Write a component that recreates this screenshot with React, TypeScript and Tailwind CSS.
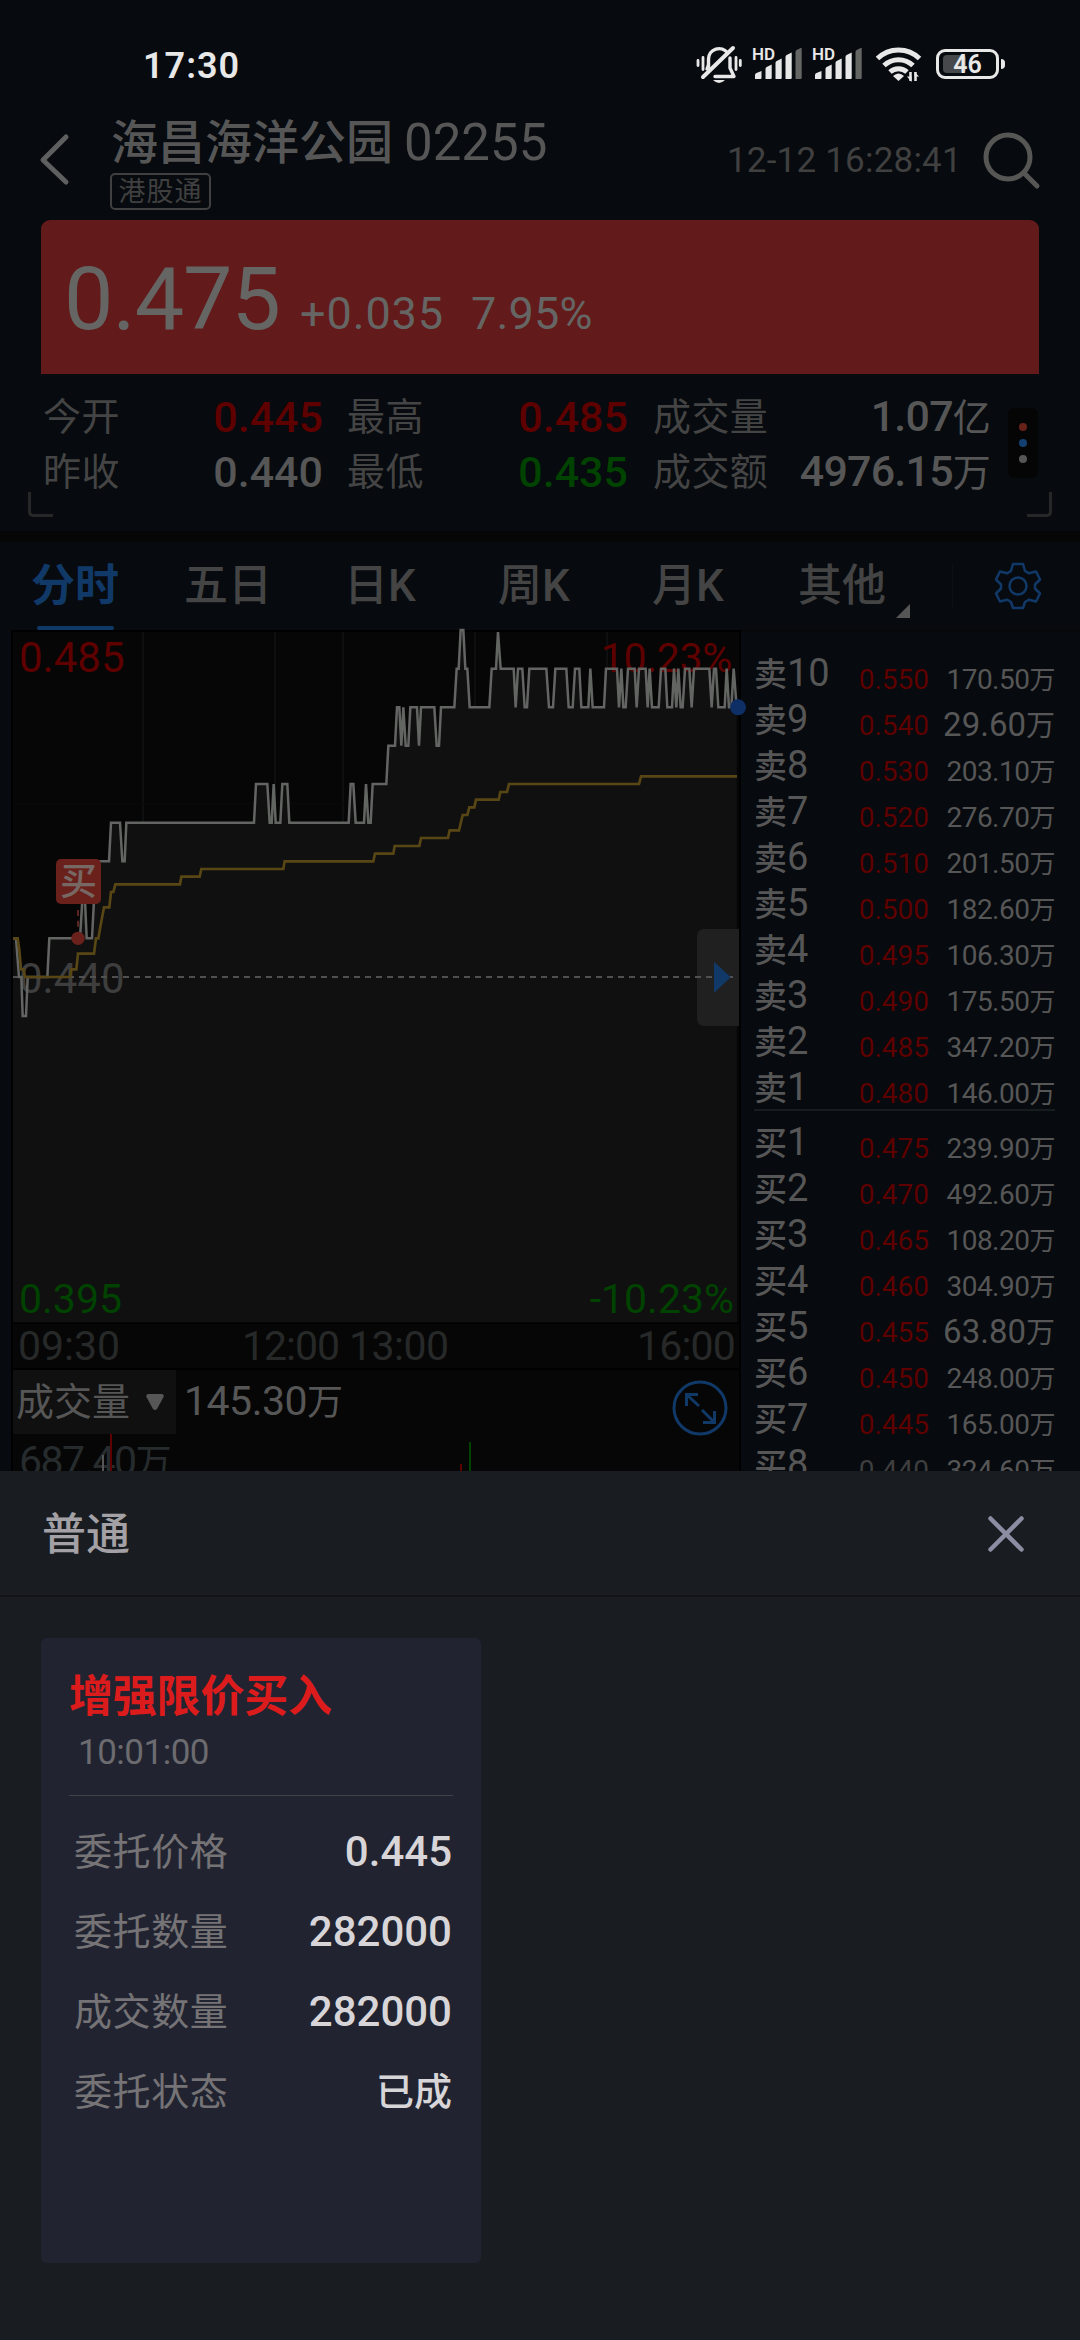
import React from 'react';
import clsx from 'clsx';

interface Level {
    label: string;
    price: string;
    volume: string;
    flat?: boolean;
}

interface Quote {
    label: string;
    value: string;
    unit?: string;
    color: string;
}

const asks: Level[] = [
    { label: '10', price: '0.550', volume: '170.50' },
    { label: '9', price: '0.540', volume: '29.60' },
    { label: '8', price: '0.530', volume: '203.10' },
    { label: '7', price: '0.520', volume: '276.70' },
    { label: '6', price: '0.510', volume: '201.50' },
    { label: '5', price: '0.500', volume: '182.60' },
    { label: '4', price: '0.495', volume: '106.30' },
    { label: '3', price: '0.490', volume: '175.50' },
    { label: '2', price: '0.485', volume: '347.20' },
    { label: '1', price: '0.480', volume: '146.00' },
];

const bids: Level[] = [
    { label: '1', price: '0.475', volume: '239.90' },
    { label: '2', price: '0.470', volume: '492.60' },
    { label: '3', price: '0.465', volume: '108.20' },
    { label: '4', price: '0.460', volume: '304.90' },
    { label: '5', price: '0.455', volume: '63.80' },
    { label: '6', price: '0.450', volume: '248.00' },
    { label: '7', price: '0.445', volume: '165.00' },
    { label: '8', price: '0.440', volume: '324.60', flat: true },
];

const quoteColumns: { width: string; items: Quote[] }[] = [
    {
        width: 'w-[280px] mr-[24px]',
        items: [
            { label: '今开', value: '0.445', color: 'text-[#5e0000]' },
            { label: '昨收', value: '0.440', color: 'text-[#565656]' },
        ],
    },
    {
        width: 'w-[281px] mr-[25px]',
        items: [
            { label: '最高', value: '0.485', color: 'text-[#5e0000]' },
            { label: '最低', value: '0.435', color: 'text-[#004200]' },
        ],
    },
    {
        width: 'w-[337px] mr-[25px]',
        items: [
            { label: '成交量', value: '1.07', unit: '亿', color: 'text-[#565656]' },
            { label: '成交额', value: '4976.15', unit: '万', color: 'text-[#565656]' },
        ],
    },
];

const orderRows = [
    { label: '委托价格', value: '0.445' },
    { label: '委托数量', value: '282000' },
    { label: '成交数量', value: '282000' },
    { label: '委托状态', value: '已成' },
];

// Chart space is three units per pixel
const priceLine =
    '39,955 48,955 57,1071 64,1071 68,1188 78,1188 83,1071 142,1071 148,955 240,955 247,840 255,840 260,955 276,955 282,840 ' +
    '290,724 327,724 333,608 360,608 367,724 374,724 379,608 762,608 768,492 802,492 809,608 815,608 821,492 827,608 841,608 ' +
    '847,492 862,492 868,608 1046,608 1052,492 1060,492 1067,608 1092,608 1098,492 1105,608 1112,608 1118,492 1159,492 ' +
    '1165,377 1185,377 1191,262 1198,262 1204,377 1210,262 1217,377 1225,377 1231,262 1251,262 1257,377 1263,262 1303,262 ' +
    '1310,377 1317,377 1323,262 1363,262 1370,146 1376,146 1382,30 1390,30 1396,146 1402,146 1409,262 1468,262 1475,146 ' +
    '1488,146 1494,36 1502,146 1541,146 1547,262 1554,146 1567,146 1574,262 1581,262 1588,146 1639,146 1647,262 1659,262 ' +
    '1666,146 1699,146 1706,262 1718,262 1725,146 1738,146 1744,262 1765,262 1771,146 1778,262 1812,262 1818,146 1851,146 ' +
    '1857,262 1864,146 1870,262 1877,262 1884,146 1904,146 1910,262 1917,146 1937,146 1943,262 1949,146 1956,262 1976,262 ' +
    '1983,146 1996,146 2002,262 2016,262 2022,146 2029,262 2035,146 2042,262 2048,262 2055,146 2068,146 2075,262 2082,146 ' +
    '2128,146 2135,262 2142,146 2148,146 2155,262 2174,262 2180,146 2187,262 2194,262 2201,146 2210,262';

const averageLine =
    '39,955 53,955 58,990 63,1048 70,1048 75,1071 210,1071 214,1048 229,1048 234,1001 282,1001 288,955 295,955 303,910 ' +
    '312,862 328,862 333,816 340,816 346,793 540,793 544,770 599,770 604,747 850,747 854,724 1120,724 1125,701 1180,701 ' +
    '1184,678 1258,678 1263,654 1344,654 1349,631 1377,631 1388,585 1402,585 1408,562 1423,562 1428,539 1496,539 1501,516 ' +
    '1521,516 1527,492 1917,492 1923,469 2211,469';

const SignalBars: React.FC = () => (
    <div className="relative h-[32px] w-[50px]">
        <span className="absolute -left-[1px] -top-[1px] text-[17px] font-semibold leading-[14px]">HD</span>
        <svg className="h-full w-full" viewBox="0 0 50 32" fill="#e8e8e8">
            <path d="M2 31v-4q0-1.500 1.500-2L8.500 23v7q0 1-1 1z" />
            <path d="M12.500 31V21q0-1.300 1.200-2l5-2.500V30q0 1-1 1z" />
            <path d="M22.500 31V15q0-1.300 1.200-2l5-2.500V30q0 1-1 1z" />
            <path d="M32.500 31V9q0-1.300 1.200-2l5-2.500V30q0 1-1 1z" />
            <path d="M42.500 31V4q0-1.300 1.200-2l5-2.500V30q0 1-1 1z" fill="#646664" />
        </svg>
    </div>
);

const StatusBar: React.FC = () => (
    <div className="flex h-[128px] items-center justify-between pl-[143px] pr-[75px] text-[#e8e8e8]">
        <span className="mt-[3px] text-[36px] font-semibold tracking-[1px]">17:30</span>
        <div className="flex items-center">
            <svg className="mr-[11px] h-[40px] w-[46px]" viewBox="0 0 46 40" fill="none" stroke="#e8e8e8" strokeWidth="3.400" strokeLinecap="round">
                <path d="M2 16.500v5M7 13.500v12M40 13.500v12M44.300 16.500v5" strokeWidth="2.800" />
                <path d="M12.500 23v-8a10.500 10.500 0 0 1 19-6M34 14v10l4 8.500H19" strokeLinejoin="round" />
                <path d="M12.500 21l-1.500 4" />
                <path d="M7 33L37 4" strokeWidth="4" />
                <path d="M17 36h12q-6 6-12 0z" fill="#e8e8e8" stroke="none" />
            </svg>
            <SignalBars />
            <div className="w-[10px]" />
            <SignalBars />
            <svg className="ml-[12px] h-[36px] w-[48px]" viewBox="0 0 48 36" fill="none" stroke="#e8e8e8" strokeWidth="5">
                <path d="M2.500 12.500a30 30 0 0 1 42 0" />
                <path d="M9 19.500a21 21 0 0 1 29 0" />
                <path d="M15 26a12.500 12.500 0 0 1 17 0" />
                <path d="M18 30q5.500-5 11 0l-5.500 5z" fill="#e8e8e8" stroke="none" />
                <path d="M35.500 26v9M40.500 35v-9" strokeWidth="2.500" />
                <path d="M32 30.500l4.500 5.500V30.500zM44 30.500L39.500 26v4.500z" fill="#e8e8e8" stroke="none" />
            </svg>
            <div className="relative ml-[13px] mr-[2px] flex h-[30px] w-[63px] items-center justify-center rounded-[9px] border-[3px] border-[#e8e8e8]">
                <div className="absolute left-[4px] top-[3px] h-[18px] w-[23px] rounded-[4px] bg-[#46484c]" />
                <span className="relative text-[25px] font-semibold leading-none">46</span>
            </div>
            <div className="h-[10px] w-[4px] rounded-r-full bg-[#e8e8e8]" />
        </div>
    </div>
);

const Header: React.FC = () => (
    <div className="flex h-[92px] items-start">
        <svg className="ml-[38px] mt-[3px] h-[56px] w-[34px]" viewBox="0 0 34 56" fill="none" stroke="#5e605f" strokeWidth="5" strokeLinecap="round" strokeLinejoin="round">
            <path d="M28 6L5 29l23 22" />
        </svg>
        <div className="ml-[38px] flex w-[560px] flex-col items-start">
            <div className="-mt-[12px] flex h-[54px] items-center whitespace-pre text-[#565656]">
                <span className="ml-px text-[47px] font-medium leading-[54px]">海昌海洋公园</span>
                <span className="ml-[11px] text-[51px] leading-[54px]">02255</span>
            </div>
            <div className="mt-[3px] flex h-[37px] w-[101px] items-center justify-center rounded-[5px] border-2 border-[#404040] pt-[2px] text-[27px] leading-none tracking-[1px] text-[#404040]">
                港股通
            </div>
        </div>
        <span className="ml-[57px] mt-[13px] text-[35px] leading-[40px] tracking-[0.2px] text-[#404040]">12-12 16:28:41</span>
        <svg className="ml-auto mr-[38px] mt-[2px] h-[60px] w-[60px]" viewBox="0 0 60 60" fill="none" stroke="#565654" strokeWidth="5" strokeLinecap="round">
            <circle cx="26" cy="27" r="22" />
            <path d="M42 43l13 13" />
        </svg>
    </div>
);

const Quotes: React.FC = () => (
    <div className="relative flex h-[157px] pl-[43px] pt-[16px]">
        {quoteColumns.map((col, i) => (
            <div key={i} className={clsx('flex flex-col', col.width)}>
                {col.items.map((q) => (
                    <div key={q.label} className="flex h-[55px] items-center justify-between whitespace-nowrap leading-[55px]">
                        <span className="text-[38px] tracking-[0.400px] text-[#444444]">{q.label}</span>
                        <span className={clsx('font-medium', q.unit ? 'text-[43px] tracking-[-0.800px]' : 'text-[43px]', q.color)}>
                            {q.value}
                            {q.unit && <span className="text-[38px] font-normal">{q.unit}</span>}
                        </span>
                    </div>
                ))}
            </div>
        ))}
        <div className="-ml-[7px] mt-[18px] flex h-[70px] w-[30px] flex-col items-center justify-center gap-[8px] rounded-[6px] bg-[#050505]">
            <i className="h-[8px] w-[8px] rounded-full bg-[#662219]" />
            <i className="h-[8px] w-[8px] rounded-full bg-[#154072]" />
            <i className="h-[8px] w-[8px] rounded-full bg-[#565656]" />
        </div>
        <div className="absolute bottom-[14px] left-[28px] h-[25px] w-[25px] rounded-bl-[5px] border-b-[3px] border-l-[3px] border-[#262828]" />
        <div className="absolute bottom-[14px] right-[28px] h-[25px] w-[25px] rounded-br-[5px] border-b-[3px] border-r-[3px] border-[#262828]" />
    </div>
);

const Tabs: React.FC = () => (
    <div className="flex h-[88px] items-center whitespace-nowrap text-[44px] leading-[90px] text-[#444444]">
        <div className="relative ml-[31px] w-[153px] font-bold text-[#113968]">
            分时
            <div className="absolute bottom-px left-[6px] h-[4px] w-[77px] rounded-full bg-[#113968]" />
        </div>
        <div className="w-[160px] font-medium">五日</div>
        <div className="w-[154px] font-medium">日K</div>
        <div className="w-[154px] font-medium">周K</div>
        <div className="w-[146px] font-medium">月K</div>
        <div className="w-[98px] font-medium">其他</div>
        <svg className="mt-[50px] h-[14px] w-[14px]" viewBox="0 0 14 14">
            <path d="M14 0v14H0z" fill="#565656" />
        </svg>
        <div className="ml-[42px] h-[42px] w-px bg-[#0d1014]" />
        <svg className="ml-[41px] h-[48px] w-[48px]" viewBox="0 0 48 48" fill="none" stroke="#113968" strokeWidth="2.500" strokeLinejoin="round">
            <path d="M19 2h10l2 7 4 2.300 7-1.800 4 8-5 5v4l5 5-4 8-7-1.800-4 2.300-2 6H19l-2-6-4-2.300-7 1.800-4-8 5-5v-4l-5-5 4-8 7 1.800 4-2.300z" />
            <circle cx="24" cy="24" r="8.500" />
        </svg>
    </div>
);

const PriceChart: React.FC = () => (
    <div className="relative h-[694px] border-2 border-black bg-[#060606] text-[42px] leading-[42px]">
        <svg className="absolute -left-[3px] -top-[3px] h-[696px] w-[743px] overflow-visible" viewBox="30 27 2229 2088" fill="none">
            <path d="M429 36V1500M825 36V1500M1029 36V1500M1425 36V1500M1821 36V1500" stroke="#101114" strokeWidth="5" />
            <path d="M39 551H2211" stroke="#0a0c0c" strokeWidth="3" />
            <polygon points={`39,2107 ${priceLine} 2211,2107`} fill="#101010" />
        </svg>
        <span className="absolute left-[6px] top-[5px] text-[#5e0000]">0.485</span>
        <span className="absolute right-[7px] top-[5px] text-[41px] tracking-[-0.300px] text-[#5e0000]">10.23%</span>
        <span className="absolute left-[6px] top-[326px] text-[#3e3e3e]">0.440</span>
        <span className="absolute bottom-[2px] left-[6px] text-[41px] text-[#004200]">0.395</span>
        <span className="absolute bottom-[2px] right-[5px] text-[41px] text-[#004200]">-10.23%</span>
        <div className="absolute right-0 top-[297px] h-[97px] w-[42px] rounded-l-[7px] bg-[#202020]" />
        <svg className="absolute -left-[3px] -top-[3px] h-[696px] w-[743px] overflow-visible" viewBox="30 27 2229 2088" fill="none">
            <path d="M39 1071H2199" stroke="#505050" strokeWidth="6" strokeDasharray="18 15" />
            <polyline points={priceLine} stroke="#636563" strokeWidth="7.500" />
            <polyline points={averageLine} stroke="#584715" strokeWidth="8" />
            <path d="M2142 1025l50 47-50 47z" fill="#113968" />
        </svg>
        <svg className="absolute -left-[3px] -top-[3px] z-10 h-[696px] w-[743px] overflow-visible" viewBox="30 27 2229 2088" fill="none">
            <path d="M234 870v50" stroke="#5c2420" strokeWidth="6" strokeDasharray="18 14" />
            <circle cx="234" cy="955" r="20" fill="#6a211c" />
            <circle cx="2214" cy="262" r="24" fill="#0d2f66" />
        </svg>
        <div className="absolute left-[43px] top-[227px] flex h-[45px] w-[45px] items-center justify-center rounded-[5px] bg-[#6a211c] pt-[2px] text-[37px] font-medium leading-[45px] text-[#776864]">
            买
        </div>
    </div>
);

const VolumeChart: React.FC = () => (
    <div className="relative h-[101px] border-x-2 border-black bg-[#060606]">
        <div className="flex h-[64px] items-center leading-[64px] text-[#565656]">
            <div className="flex h-full w-[163px] items-center bg-[#101010] pl-[3px] text-[38px]">
                成交量
                <svg className="ml-[16px] h-[16px] w-[18px]" viewBox="0 0 18 16">
                    <path d="M2 0h14q3 1 1 4l-6 11q-2 2-4 0L1 4q-2-3 1-4z" fill="#565656" />
                </svg>
            </div>
            <span className="ml-[8px] text-[41px] tracking-[-0.500px]">145.30<span className="text-[36px]">万</span></span>
            <svg className="ml-auto mr-[11px] mt-[12px] h-[56px] w-[56px]" viewBox="0 0 56 56" fill="none" stroke="#113968" strokeWidth="3">
                <circle cx="28" cy="28" r="26" />
                <path d="M14.500 26V14.500H26M14.500 14.500L27 26M30 30l12.500 12.500M31 42.500h11.500V31" />
            </svg>
        </div>
        <span className="absolute left-[6px] top-[66px] text-[41px] leading-[50px] tracking-[-1.600px] text-[#262c2d]">687.40<span className="text-[36px]">万</span></span>
        <svg className="absolute left-0 top-[64px] h-[46px] w-[720px]" viewBox="0 0 720 46" strokeWidth="2">
            <path d="M98 0v46M448 30v16" stroke="#5e0000" />
            <path d="M90 21v25" stroke="#565656" />
            <path d="M457 8v38" stroke="#004200" />
        </svg>
    </div>
);

const LevelRow: React.FC<{ side: string; level: Level }> = ({ side, level }) => (
    <div className="flex h-[46px] shrink-0 items-center whitespace-nowrap leading-[46px]">
        <span className="w-[90px] text-[#565656]">
            <span className="text-[33px] font-medium">{side}</span>
            <span className="text-[38px]">{level.label}</span>
        </span>
        <span className={clsx('mt-[5px] w-[85px] text-right text-[28px]', level.flat ? 'text-[#3e3e3e]' : 'text-[#5e0000]')}>
            {level.price}
        </span>
        <span
            className={clsx(
                'flex-1 text-right text-[#565656]',
                level.volume.length < 6 ? 'mt-[4px] text-[33px]' : 'mt-[5px] text-[28px] tracking-[-0.500px]'
            )}
        >
            {level.volume}
            <span className={level.volume.length < 6 ? 'text-[29px]' : 'text-[26px]'}>万</span>
        </span>
    </div>
);

const OrderBook: React.FC = () => (
    <div className="flex h-[841px] flex-1 flex-col overflow-hidden border-t-2 border-[#06080a] pl-[13px] pr-[25px]">
        <div className="flex h-[479px] shrink-0 flex-col border-b-2 border-[#171d1e] pt-[22px]">
            {asks.map((level) => (
                <LevelRow key={level.label} side="卖" level={level} />
            ))}
        </div>
        <div className="flex flex-col pt-[12px]">
            {bids.map((level) => (
                <LevelRow key={level.label} side="买" level={level} />
            ))}
        </div>
    </div>
);

const OrderSheet: React.FC = () => (
    <div className="flex h-[869px] flex-col bg-[#191c21]">
        <div className="flex h-[126px] items-center justify-between border-b-2 border-[#121418] pl-[42px] pr-[55px]">
            <span className="pt-[4px] text-[44px] font-medium leading-none text-[#a3a1a5]">普通</span>
            <svg className="mt-[2px] h-[38px] w-[38px]" viewBox="0 0 38 38" stroke="#8c8ca2" strokeWidth="4.500" strokeLinecap="round">
                <path d="M3.500 3.500l31 31M34.500 3.500l-31 31" />
            </svg>
        </div>
        <div className="ml-[41px] mt-[41px] h-[625px] w-[440px] rounded-[6px] bg-[#212430] pl-[28px] pr-[28px] pt-[35px]">
            <div className="h-[48px] text-[44px] font-bold leading-[48px] tracking-[-0.200px] text-[#dc1c1c]">增强限价买入</div>
            <div className="ml-[9px] mt-[12px] h-[40px] text-[35px] leading-[40px] tracking-[-0.500px] text-[#6c6b6f]">10:01:00</div>
            <div className="mt-[22px] h-px bg-[#414247]" />
            <div className="mt-[16px] flex flex-col pl-[5px] pr-px">
                {orderRows.map((row) => (
                    <div key={row.label} className="flex h-[80px] items-center justify-between leading-[80px]">
                        <span className="text-[38px] tracking-[0.600px] text-[#757376]">{row.label}</span>
                        <span className={clsx('font-medium text-[#d8d5d9]', row.value === '已成' ? 'text-[38px]' : 'text-[42px]')}>
                            {row.value}
                        </span>
                    </div>
                ))}
            </div>
        </div>
    </div>
);

const App: React.FC = () => {
    return (
        <div className="flex h-[2340px] w-[1080px] flex-col overflow-hidden bg-[#070a0e] font-[Roboto,'Noto_Sans_CJK_SC',sans-serif]">
            <div className="flex h-[1471px] flex-col overflow-hidden">
                <StatusBar />
                <Header />
                <div className="mx-[41px] flex h-[154px] items-baseline rounded-t-[9px] bg-[#631a1b] pl-[23px] leading-[158px] text-[#656664]">
                    <span className="text-[88px] tracking-[-1px]">0.475</span>
                    <span className="ml-[20px] text-[45px] tracking-[0.900px]">+0.035</span>
                    <span className="ml-[27px] text-[45px] tracking-[0.200px]">7.95%</span>
                </div>
                <Quotes />
                <div className="h-[11px] bg-[#060606]" />
                <Tabs />
                <div className="flex h-[841px]">
                    <div className="ml-[11px] w-[730px]">
                        <PriceChart />
                        <div className="relative flex h-[46px] items-center justify-between border-x-2 border-b-2 border-black bg-[#060606] px-[5px] text-[41px] leading-[46px] text-[#272929]">
                            <span>09:30</span>
                            <span className="absolute left-[229px] tracking-[-1px]">12:00</span>
                            <span className="absolute left-[336px] tracking-[-0.500px]">13:00</span>
                            <span className="-mr-px tracking-[-0.800px]">16:00</span>
                        </div>
                        <VolumeChart />
                    </div>
                    <OrderBook />
                </div>
            </div>
            <OrderSheet />
        </div>
    );
};

export default App;
